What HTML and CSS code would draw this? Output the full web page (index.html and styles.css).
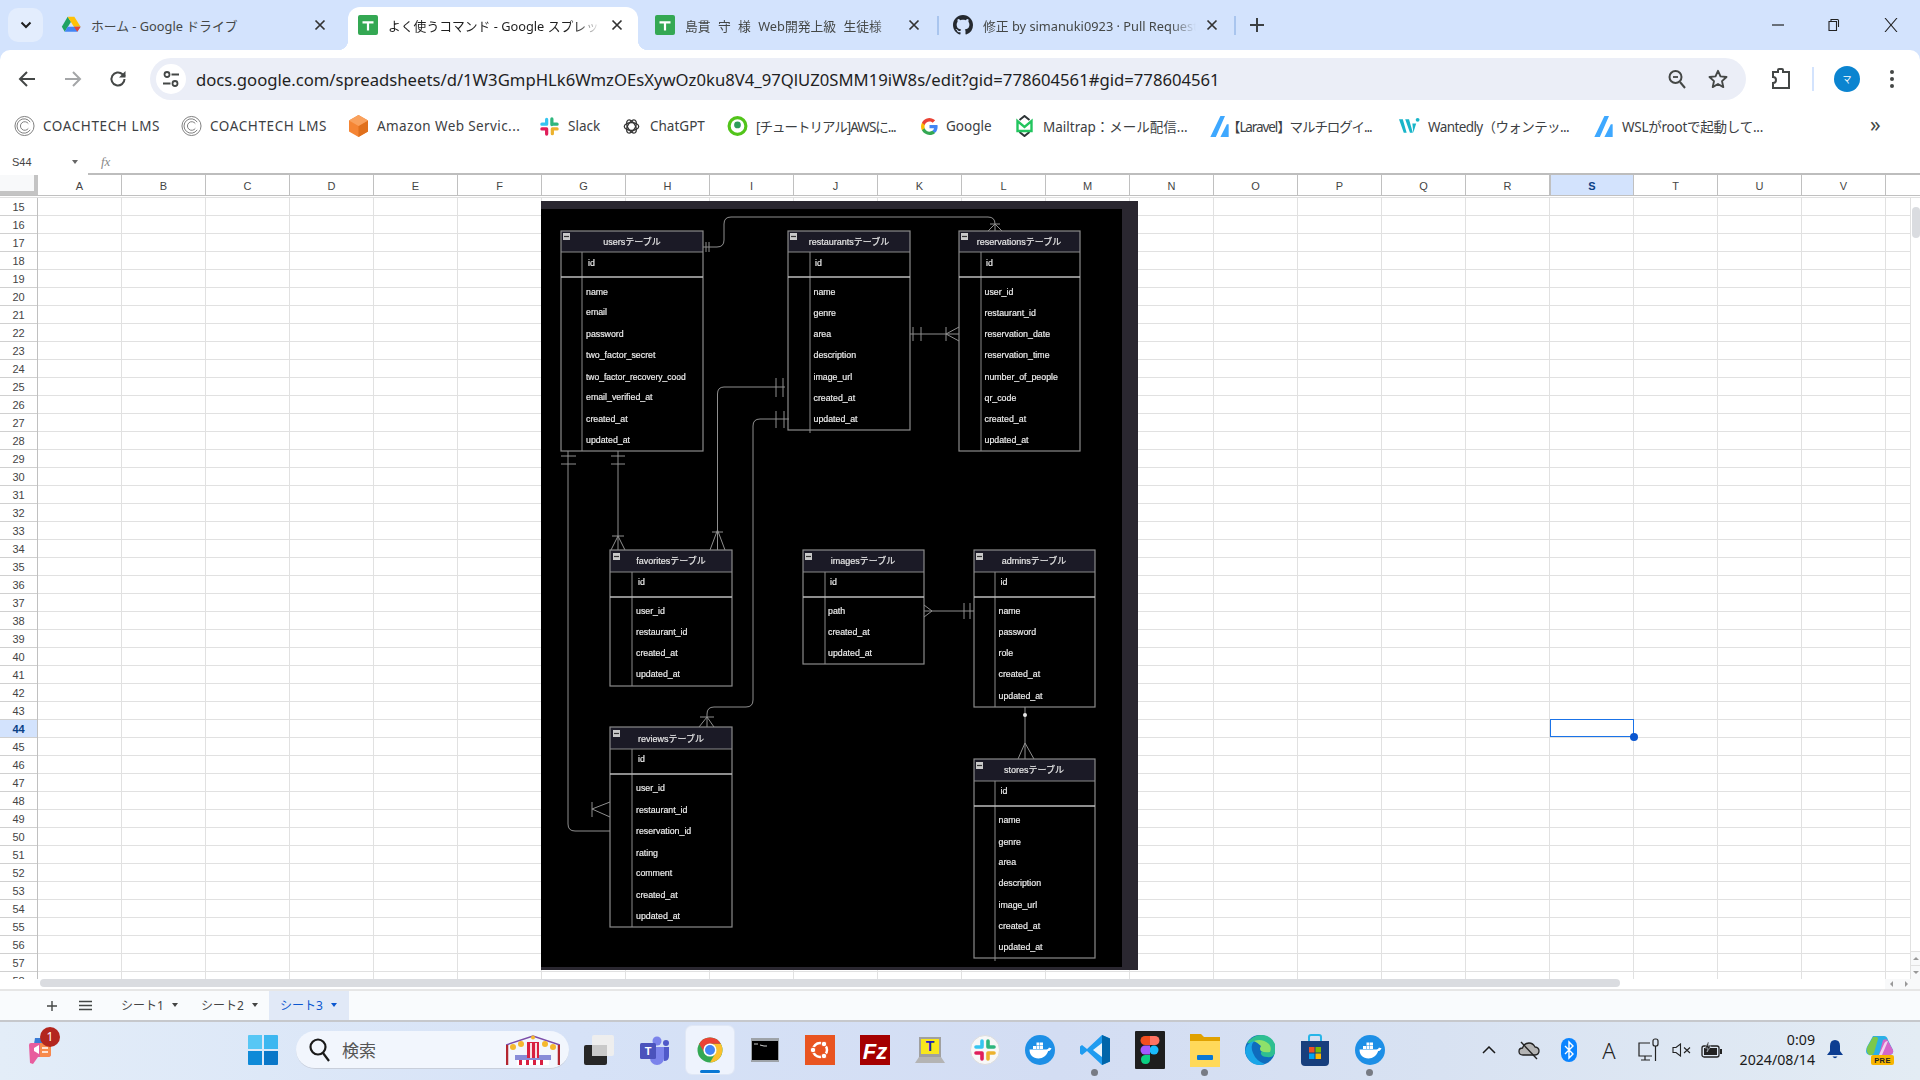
FILE: index.html
```html
<!DOCTYPE html>
<html lang="ja">
<head>
<meta charset="utf-8">
<title>よく使うコマンド - Google スプレッドシート</title>
<link rel="stylesheet" href="styles.css">
</head>
<body>
<svg class="defs" aria-hidden="true">
  <symbol id="sheets" viewBox="0 0 20 20"><rect width="20" height="20" rx="2" fill="#34a853"/><path d="M4.5 6.2h11v2.2h-4.4v7h-2.2v-7H4.500z" fill="#fff"/></symbol>
  <symbol id="x" viewBox="0 0 12 12"><path d="M1.500 1.500l9 9M10.500 1.500l-9 9" fill="none" stroke="currentColor" stroke-width="1.700"/></symbol>
  <symbol id="coach" viewBox="0 0 22 22"><g fill="none" stroke="#7a7a7a" stroke-width="1"><circle cx="11" cy="11" r="10"/><path d="M17 7a7.500 7.500 0 1 0 0 8"/><path d="M15 8.500a4.500 4.500 0 1 0 0 5"/></g></symbol>
  <symbol id="zenn" viewBox="0 0 20 24"><path d="M0 24L11 1h5L6 24zM11 24l7-14h2v14z" fill="#3ea8ff"/></symbol>
  <symbol id="docker" viewBox="0 0 30 30"><circle cx="15" cy="15" r="15" fill="#1d8fe6"/><path d="M4.500 14.500h17c1 0 2-1 2.500-2 1 .5 2 .6 2.500.4-.5 2-2 3-3.300 3.200C21.500 21 18 23.500 13.500 23.500 8 23.500 4.500 20 4.500 14.500z" fill="#fff"/><path d="M8 11h3v3H8zM11.500 11h3v3h-3zM15 11h3v3h-3zM11.500 7.500h3v3h-3zM15 7.500h3v3h-3z" fill="#fff"/></symbol>
</svg>

<header class="tabstrip">
  <button class="tab-search"><svg width="12" height="8" viewBox="0 0 12 8"><path d="M1.500 1.500L6 6l4.500-4.500" fill="none" stroke="#1f1f1f" stroke-width="2"/></svg></button>
  <div class="tab tab-a">
    <svg class="fav" viewBox="0 0 24 22"><path d="M8 1L1 13l3.500 6L12 7z" fill="#1ea362"/><path d="M8 1h8l7.500 12h-8z" fill="#ffc107"/><path d="M4.500 19h15l4-6H8z" fill="#4285f4"/><path d="M19.500 19l4-6h-8z" fill="#ea4335"/></svg>
    <span class="tab-title">ホーム - Google ドライブ</span>
    <svg class="tab-x"><use href="#x"/></svg>
  </div>
  <div class="tab tab-b">
    <svg class="fav"><use href="#sheets"/></svg>
    <span class="tab-title fade">よく使うコマンド - Google スプレッドシート</span>
    <svg class="tab-x"><use href="#x"/></svg>
  </div>
  <div class="tab tab-c">
    <svg class="fav"><use href="#sheets"/></svg>
    <span class="tab-title fade">島貫 守 様 Web開発上級 生徒様</span>
    <svg class="tab-x"><use href="#x"/></svg>
  </div>
  <div class="tab tab-d">
    <svg class="fav" viewBox="0 0 16 16"><path fill="#24292f" d="M8 0C3.580 0 0 3.580 0 8c0 3.540 2.290 6.530 5.470 7.590.4.070.55-.17.55-.38 0-.19-.01-.82-.01-1.490-2.010.37-2.530-.49-2.690-.94-.09-.23-.48-.94-.82-1.130-.28-.15-.68-.52-.01-.53.63-.01 1.080.58 1.230.82.72 1.210 1.870.87 2.330.66.07-.52.28-.87.51-1.070-1.780-.2-3.640-.89-3.640-3.950 0-.87.31-1.590.82-2.150-.08-.2-.36-1.020.08-2.120 0 0 .67-.21 2.200.82.64-.18 1.320-.27 2-.27.68 0 1.360.09 2 .27 1.530-1.040 2.200-.82 2.200-.82.44 1.100.16 1.920.08 2.120.51.56.82 1.270.82 2.150 0 3.070-1.870 3.750-3.650 3.950.29.25.54.73.54 1.480 0 1.070-.01 1.930-.01 2.200 0 .21.15.46.55.38A8.013 8.013 0 0016 8c0-4.420-3.580-8-8-8z"/></svg>
    <span class="tab-title fade">修正 by simanuki0923 · Pull Request</span>
    <svg class="tab-x"><use href="#x"/></svg>
  </div>
  <svg class="newtab" viewBox="0 0 14 14"><path d="M7 0v14M0 7h14" stroke="#3c4043" stroke-width="2"/></svg>
  <div class="winbtns">
    <svg class="winbtn" viewBox="0 0 14 14"><path d="M1 7h12" stroke="#222" stroke-width="1.200"/></svg>
    <svg class="winbtn" viewBox="0 0 14 14"><path d="M3 3.500h7.500v9H3zM5 3.500V1.500h6.500q1 0 1 1V9" fill="none" stroke="#222" stroke-width="1.100"/></svg>
    <svg class="winbtn" viewBox="0 0 14 14"><path d="M1 0l12 14M13 0L1 14" stroke="#222" stroke-width="1.100"/></svg>
  </div>
</header>

<nav class="toolbar">
  <span class="navbtn"><svg width="18" height="18" viewBox="0 0 18 18"><path d="M17 9H2.500M9 2L2 9l7 7" fill="none" stroke="#444746" stroke-width="2"/></svg></span>
  <span class="navbtn"><svg width="18" height="18" viewBox="0 0 18 18"><path d="M1 9h14.500M9 2l7 7-7 7" fill="none" stroke="#a4a6a8" stroke-width="2"/></svg></span>
  <span class="navbtn"><svg width="18" height="18" viewBox="0 0 18 18"><path d="M15.500 9a6.500 6.500 0 1 1-2-4.700L16 6.500" fill="none" stroke="#444746" stroke-width="2"/><path d="M16.500 1v6.500H10z" fill="#444746"/></svg></span>
  <div class="omnibox">
    <span class="site-info"><svg width="16" height="18" viewBox="0 0 16 18"><g fill="none" stroke="#444746" stroke-width="1.800"><circle cx="4" cy="4.500" r="2.500"/><path d="M8.500 4.500H16M0 13.500h7.500"/><circle cx="12" cy="13.500" r="2.500"/></g></svg></span>
    <span class="url">docs.google.com/spreadsheets/d/1W3GmpHLk6WmzOEsXywOz0ku8V4_97QlUZ0SMM19iW8s/edit?gid=778604561#gid=778604561</span>
    <svg class="omni-zoom" width="18" height="20" viewBox="0 0 18 20"><g fill="none" stroke="#444746" stroke-width="2"><circle cx="7.500" cy="8" r="6"/><path d="M12 13l5 6"/></g><path d="M5 8h5" stroke="#444746" stroke-width="1.800"/></svg>
    <svg class="omni-star" width="20" height="20" viewBox="0 0 20 20"><path d="M10 1.800l2.500 5.600 6 .6-4.500 4.100 1.300 6L10 15l-5.300 3.100 1.300-6L1.500 8l6-.6z" fill="none" stroke="#444746" stroke-width="1.900" stroke-linejoin="round"/></svg>
  </div>
  <svg class="ext" width="20" height="22" viewBox="0 0 20 22"><path d="M2 4h5V2q0-1 1-1h3q1 0 1 1v2h6v16H2v-5q3 0 3-3t-3-3z" fill="none" stroke="#444746" stroke-width="2"/></svg>
  <span class="tb-sep"></span>
  <span class="avatar">マ</span>
  <svg class="kebab" width="4" height="18" viewBox="0 0 4 18"><g fill="#444746"><circle cx="2" cy="2" r="2"/><circle cx="2" cy="9" r="2"/><circle cx="2" cy="16" r="2"/></g></svg>
</nav>

<nav class="bookmarks">
  <a class="bm sp-coach"><svg class="bm-ico"><use href="#coach"/></svg>COACHTECH LMS</a>
  <a class="bm sp-coach"><svg class="bm-ico"><use href="#coach"/></svg>COACHTECH LMS</a>
  <a class="bm sp-aws"><svg class="bm-ico" viewBox="0 0 20 22"><path d="M10 0l9.500 5.500v11L10 22 .5 16.500v-11z" fill="#f58534"/><path d="M10 11v11l9.500-5.500v-11z" fill="#e0701c"/><path d="M10 0L.5 5.500 10 11l9.500-5.500z" fill="#f9a15d"/></svg>Amazon Web Servic...</a>
  <a class="bm"><svg class="bm-ico bm-slack" viewBox="0 0 20 20"><g stroke-width="3.400" stroke-linecap="round" fill="none"><path d="M7 2.500v5M2 7.500h5" stroke="#36c5f0"/><path d="M12.500 2v6M12.500 7.500H18" stroke="#2eb67d"/><path d="M13 12.500h5M13 12.500v5" stroke="#ecb22e"/><path d="M7 18v-5M2 12.500h5" stroke="#e01e5a"/></g></svg>Slack</a>
  <a class="bm"><svg class="bm-ico bm-gpt" viewBox="0 0 20 20"><g fill="none" stroke="#333" stroke-width="1.500"><ellipse cx="10" cy="10" rx="8.500" ry="4.500"/><ellipse cx="10" cy="10" rx="8.500" ry="4.500" transform="rotate(60 10 10)"/><ellipse cx="10" cy="10" rx="8.500" ry="4.500" transform="rotate(120 10 10)"/></g></svg>ChatGPT</a>
  <a class="bm sp-chute"><svg class="bm-ico" viewBox="0 0 20 20"><circle cx="10" cy="10" r="8" fill="none" stroke="#52c41a" stroke-width="3"/><circle cx="10" cy="9" r="3.200" fill="#2e9e5b"/></svg>[チュートリアル]AWSに...</a>
  <a class="bm"><svg class="bm-ico bm-g" viewBox="0 0 18 18"><path d="M17.600 9.200c0-.6-.1-1.200-.2-1.800H9v3.400h4.800c-.2 1.100-.8 2-1.800 2.700v2.200h2.900c1.700-1.600 2.700-3.900 2.700-6.500z" fill="#4285f4"/><path d="M9 18c2.400 0 4.500-.8 5.900-2.200L12 13.600c-.8.500-1.800.9-3 .9-2.300 0-4.300-1.600-5-3.700H1v2.300C2.500 16 5.500 18 9 18z" fill="#34a853"/><path d="M4 10.700a5.400 5.400 0 0 1 0-3.400V5H1a9 9 0 0 0 0 8z" fill="#fbbc05"/><path d="M9 3.600c1.300 0 2.500.5 3.400 1.300L15 2.400A9 9 0 0 0 1 5l3 2.300c.7-2.100 2.700-3.700 5-3.700z" fill="#ea4335"/></svg>Google</a>
  <a class="bm"><svg class="bm-ico" viewBox="0 0 20 22"><path d="M5 5l5-4 5 4M5 17l5 4 5-4" fill="none" stroke="#2d3436" stroke-width="2"/><path d="M3 6v10h14V6l-7 6z" fill="none" stroke="#22c55e" stroke-width="2.400"/></svg>Mailtrap：メール配信...</a>
  <a class="bm bm-zenn"><svg class="bm-ico"><use href="#zenn"/></svg>【Laravel】マルチログイ...</a>
  <a class="bm sp-want"><svg class="bm-ico" viewBox="0 0 22 20"><path d="M0 3h4l4 14H5zM6.500 3h4l4 14h-3zM14 7.500h4L15 17z" fill="#19b5c9"/><circle cx="19.500" cy="3.500" r="2" fill="#19b5c9"/></svg>Wantedly（ウォンテッ...</a>
  <a class="bm sp-wsl"><svg class="bm-ico"><use href="#zenn"/></svg>WSLがrootで起動して...</a>
  <span class="bm-more">»</span>
</nav>

<div class="formula">
  <span class="namebox">S44</span>
  <span class="name-arrow"></span>
  <span class="fx">fx</span>
  <span class="formula-input"></span>
</div>

<main class="sheet">
  <div class="colhead">
    <div class="cols">
      <span class="corner"></span>
      <span class="col">A</span><span class="col">B</span><span class="col">C</span><span class="col">D</span><span class="col">E</span><span class="col">F</span><span class="col">G</span><span class="col">H</span><span class="col">I</span><span class="col">J</span><span class="col">K</span><span class="col">L</span><span class="col">M</span><span class="col">N</span><span class="col">O</span><span class="col">P</span><span class="col">Q</span><span class="col">R</span><span class="col col-on">S</span><span class="col">T</span><span class="col">U</span><span class="col">V</span>
    </div>
  </div>
  <div class="grid">
    <div class="rows">
      <span class="row">15</span><span class="row">16</span><span class="row">17</span><span class="row">18</span><span class="row">19</span><span class="row">20</span><span class="row">21</span><span class="row">22</span><span class="row">23</span><span class="row">24</span><span class="row">25</span><span class="row">26</span><span class="row">27</span><span class="row">28</span><span class="row">29</span><span class="row">30</span><span class="row">31</span><span class="row">32</span><span class="row">33</span><span class="row">34</span><span class="row">35</span><span class="row">36</span><span class="row">37</span><span class="row">38</span><span class="row">39</span><span class="row">40</span><span class="row">41</span><span class="row">42</span><span class="row">43</span><span class="row row-on">44</span><span class="row">45</span><span class="row">46</span><span class="row">47</span><span class="row">48</span><span class="row">49</span><span class="row">50</span><span class="row">51</span><span class="row">52</span><span class="row">53</span><span class="row">54</span><span class="row">55</span><span class="row">56</span><span class="row">57</span><span class="row">58</span>
    </div>
    <div class="cells"></div>
  </div>
  <div class="hscroll"><span class="hthumb"></span><span class="harrows"><i class="al"></i><i class="ar"></i></span></div>

  <div class="vscroll"><span class="vthumb"></span><span class="vbtn"><i class="au"></i></span><span class="vbtn"><i class="ad"></i></span></div>
  <div class="selection"><span class="handle"></span></div>

  <svg class="er" viewBox="541 201 597 769">
    <rect x="541" y="201" width="597" height="769" fill="#2a2730"/>
    <rect x="541" y="209" width="581" height="758" fill="#000"/>

    <g class="link">
      <path d="M703 247H717Q724 247 724 240V224Q724 217 731 217H988Q995 217 995 224V231"/>
      <path d="M706 242V252M709 242V252M988 231L995 224L1002 231M990 224H1000"/>
      <path d="M910 334H959M913 327V341M921 327V341M946 327V341M959 327L946 334L959 341"/>
      <path d="M717.500 550V394Q717.500 387 724 387H785M776 378V397M783 378V397"/>
      <path d="M710 550L717.500 530L725 550M712 532H723"/>
      <path d="M707 727V714Q707 707 714 707H746Q753 707 753 700V426Q753 419 760 419H789M776 411V428M784 411V428"/>
      <path d="M699 727L707 717L714 727M700 717H714"/>
      <path d="M568 451V824Q568 831 575 831H610M561 456H576M561 464H576"/>
      <path d="M618 451V550M611 456H625M611 464H625M611 550L618 536L625 550M612 536H624"/>
      <path d="M592 802V817M592 809L610 802M592 809L610 817"/>
      <path d="M924 611H974M924 605L932 611L924 617M964 603V619M970 603V619"/>
      <path d="M1025 707V759M1018 759L1025 743L1034 759"/>
      <circle cx="1025" cy="715" r="2" class="dot"/>
    </g>

    <g class="tbl">
      <rect class="head" x="561" y="231" width="142" height="21"/><rect class="box" x="561" y="231" width="142" height="220"/>
      <path class="ln" d="M561 252H703M582 252V451"/><path class="dbl" d="M561 277H703"/>
      <rect class="mini" x="563" y="233" width="7" height="7"/><path class="dash" d="M564 236.500H569"/>
      <text class="ttl" x="632" y="245">usersテーブル</text>
      <text x="588" y="266">id</text><text x="586" y="295">name</text><text x="586" y="315">email</text><text x="586" y="337">password</text><text x="586" y="358">two_factor_secret</text><text x="586" y="380" class="tight">two_factor_recovery_cood</text><text x="586" y="400">email_verified_at</text><text x="586" y="422">created_at</text><text x="586" y="443">updated_at</text>
    </g>
    <g class="tbl">
      <rect class="head" x="788" y="231" width="122" height="21"/><rect class="box" x="788" y="231" width="122" height="199"/>
      <path class="ln" d="M788 252H910M810 252V433"/><path class="dbl" d="M788 277H910"/>
      <rect class="mini" x="790" y="233" width="7" height="7"/><path class="dash" d="M791 236.500H796"/>
      <text class="ttl" x="849" y="245">restaurantsテーブル</text>
      <text x="815" y="266">id</text><text x="813.500" y="295">name</text><text x="813.500" y="316">genre</text><text x="813.500" y="337">area</text><text x="813.500" y="358">description</text><text x="813.500" y="380">image_url</text><text x="813.500" y="401">created_at</text><text x="813.500" y="422">updated_at</text>
    </g>
    <g class="tbl">
      <rect class="head" x="959" y="231" width="121" height="21"/><rect class="box" x="959" y="231" width="121" height="220"/>
      <path class="ln" d="M959 252H1080M981 252V451"/><path class="dbl" d="M959 277H1080"/>
      <rect class="mini" x="961" y="233" width="7" height="7"/><path class="dash" d="M962 236.500H967"/>
      <text class="ttl" x="1019" y="245">reservationsテーブル</text>
      <text x="986" y="266">id</text><text x="984.500" y="295">user_id</text><text x="984.500" y="316">restaurant_id</text><text x="984.500" y="337">reservation_date</text><text x="984.500" y="358">reservation_time</text><text x="984.500" y="380">number_of_people</text><text x="984.500" y="401">qr_code</text><text x="984.500" y="422">created_at</text><text x="984.500" y="443">updated_at</text>
    </g>
    <g class="tbl">
      <rect class="head" x="610" y="550" width="122" height="22"/><rect class="box" x="610" y="550" width="122" height="136"/>
      <path class="ln" d="M610 572H732M632 572V686"/><path class="dbl" d="M610 597H732"/>
      <rect class="mini" x="613" y="553" width="7" height="7"/><path class="dash" d="M614 556.500H619"/>
      <text class="ttl" x="671" y="564">favoritesテーブル</text>
      <text x="638" y="585">id</text><text x="636" y="614">user_id</text><text x="636" y="635">restaurant_id</text><text x="636" y="656">created_at</text><text x="636" y="677">updated_at</text>
    </g>
    <g class="tbl">
      <rect class="head" x="803" y="550" width="121" height="22"/><rect class="box" x="803" y="550" width="121" height="114"/>
      <path class="ln" d="M803 572H924M825 572V664"/><path class="dbl" d="M803 597H924"/>
      <rect class="mini" x="805" y="553" width="7" height="7"/><path class="dash" d="M806 556.500H811"/>
      <text class="ttl" x="863" y="564">imagesテーブル</text>
      <text x="830" y="585">id</text><text x="828" y="614">path</text><text x="828" y="635">created_at</text><text x="828" y="656">updated_at</text>
    </g>
    <g class="tbl">
      <rect class="head" x="974" y="550" width="121" height="22"/><rect class="box" x="974" y="550" width="121" height="157"/>
      <path class="ln" d="M974 572H1095M995 572V707"/><path class="dbl" d="M974 597H1095"/>
      <rect class="mini" x="976" y="553" width="7" height="7"/><path class="dash" d="M977 556.500H982"/>
      <text class="ttl" x="1034" y="564">adminsテーブル</text>
      <text x="1000.500" y="585">id</text><text x="998.500" y="614">name</text><text x="998.500" y="635">password</text><text x="998.500" y="656">role</text><text x="998.500" y="677">created_at</text><text x="998.500" y="699">updated_at</text>
    </g>
    <g class="tbl">
      <rect class="head" x="610" y="727" width="122" height="22"/><rect class="box" x="610" y="727" width="122" height="200"/>
      <path class="ln" d="M610 749H732M632 749V927"/><path class="dbl" d="M610 774H732"/>
      <rect class="mini" x="613" y="730" width="7" height="7"/><path class="dash" d="M614 733.500H619"/>
      <text class="ttl" x="671" y="742">reviewsテーブル</text>
      <text x="638" y="762">id</text><text x="636" y="791">user_id</text><text x="636" y="813">restaurant_id</text><text x="636" y="834">reservation_id</text><text x="636" y="856">rating</text><text x="636" y="876">comment</text><text x="636" y="898">created_at</text><text x="636" y="919">updated_at</text>
    </g>
    <g class="tbl">
      <rect class="head" x="974" y="759" width="121" height="22"/><rect class="box" x="974" y="759" width="121" height="199"/>
      <path class="ln" d="M974 781H1095M995 781V961"/><path class="dbl" d="M974 806H1095"/>
      <rect class="mini" x="976" y="762" width="7" height="7"/><path class="dash" d="M977 765.500H982"/>
      <text class="ttl" x="1034" y="773">storesテーブル</text>
      <text x="1000.500" y="794">id</text><text x="998.500" y="823">name</text><text x="998.500" y="845">genre</text><text x="998.500" y="865">area</text><text x="998.500" y="886">description</text><text x="998.500" y="908">image_url</text><text x="998.500" y="929">created_at</text><text x="998.500" y="950">updated_at</text>
    </g>
  </svg>
</main>

<div class="sheetbar">
  <svg class="sb-add" width="10" height="10" viewBox="0 0 10 10"><path d="M5 0v10M0 5h10" stroke="#444746" stroke-width="1.400"/></svg>
  <svg class="sb-all" width="13" height="11" viewBox="0 0 13 11"><path d="M0 1.500h13M0 5.500h13M0 9.500h13" stroke="#444746" stroke-width="1.500"/></svg>
  <span class="stab">シート1<i class="caret"></i></span>
  <span class="stab">シート2<i class="caret"></i></span>
  <span class="stab stab-on">シート3<i class="caret"></i></span>
</div>

<footer class="taskbar">
  <span class="tk-notify">
    <svg width="30" height="32" viewBox="0 0 30 32"><path d="M9 4l14 0v18H6z" fill="#3a7bd5"/><path d="M3 11q0-2 2-2h17q3 0 3 3v8q0 3-3 3H12l-5 7-3-1z" fill="#e85d9e"/><path d="M14 9h8q3 0 3 3v8q0 3-3 3h-8z" fill="#f78a4a"/><path d="M8 14l5-3v9l-5-3z" fill="#fff"/><path d="M16 14h6M16 18h6" stroke="#fff" stroke-width="1.500"/></svg>
    <b class="tk-badge">1</b>
  </span>
  <span class="tk-win"><svg width="30" height="30" viewBox="0 0 30 30"><path d="M0 1q0-1 1-1h13v14H0z" fill="#57c7f5"/><path d="M16 0h13q1 0 1 1v13H16z" fill="#3db7f0"/><path d="M0 16h14v14H1q-1 0-1-1z" fill="#0f8ad8"/><path d="M16 16h14v13q0 1-1 1H16z" fill="#0a77c8"/></svg></span>
  <div class="tk-search">
    <svg width="21" height="24" viewBox="0 0 21 24"><g fill="none" stroke="#1a1a1a" stroke-width="2.200"><circle cx="9" cy="9" r="7.500"/><path d="M14 15l6 8"/></g></svg>
    <span class="tk-search-text">検索</span>
    <svg class="tk-fest" width="54" height="30" viewBox="0 0 54 30"><path d="M0 10L27 1l27 9" fill="none" stroke="#7b4ba8" stroke-width="1.500"/><path d="M1 10v20M53 10v20" stroke="#b3262f" stroke-width="2.500"/><path d="M9 20h36v5H9z" fill="#5b5fc7" opacity=".7"/><path d="M11 25h32v5H11z" fill="#fff"/><path d="M13 25h3v5h-3zM20 25h3v5h-3zM27 25h3v5h-3zM34 25h3v5h-3z" fill="#d81f40"/><path d="M21 7h12v16H21z" fill="#d81f40"/><path d="M24 8h2v15h-2zM29 8h2v15h-2z" fill="#f8dde2"/><g fill="#f5b82e"><circle cx="7" cy="12" r="3"/><circle cx="15" cy="9" r="3"/><circle cx="39" cy="9" r="3"/><circle cx="47" cy="12" r="3"/><circle cx="27" cy="2.500" r="2"/></g></svg>
  </div>
  <div class="tiles">
    <span class="tile"><svg width="30" height="30" viewBox="0 0 30 30"><rect x="8" width="22" height="21" rx="2" fill="#eeeeee"/><rect y="10" width="23" height="20" rx="2" fill="#272727"/><rect x="8" y="10" width="15" height="11" fill="#c9c9c9"/></svg></span>
    <span class="tile"><svg width="30" height="30" viewBox="0 0 30 30"><circle cx="17" cy="6" r="4.500" fill="#7b83eb"/><circle cx="26" cy="8" r="3" fill="#5059c9"/><path d="M21 12h8v9q0 5-5 5z" fill="#5059c9"/><path d="M10 12h14v11a7 7 0 0 1-14 0z" fill="#7b83eb"/><rect y="8" width="16" height="16" rx="1.500" fill="#4b53bc"/><text class="tk-t" x="8" y="20">T</text></svg></span>
    <span class="tile tile-on"><svg width="30" height="30" viewBox="0 0 48 48"><circle cx="24" cy="24" r="20" fill="#34a853"/><path d="M24 14H41.300A20 20 0 0 1 24 44L32.700 29A10 10 0 0 0 24 14Z" fill="#fbc02d"/><path d="M24 4A20 20 0 0 1 41.300 14H24A10 10 0 0 0 15.300 29L6.700 14A20 20 0 0 1 24 4Z" fill="#ea4335"/><circle cx="24" cy="24" r="10.500" fill="#fff"/><circle cx="24" cy="24" r="8" fill="#4285f4"/></svg><i class="run-on"></i></span>
    <span class="tile"><svg width="28" height="24" viewBox="0 0 28 24"><rect width="28" height="24" fill="#9ea3a8"/><rect x="1" y="3" width="26" height="19" fill="#000"/><path d="M3 6h4M9 7l4 1h3" stroke="#ccc" stroke-width="1"/></svg></span>
    <span class="tile"><svg width="30" height="30" viewBox="0 0 30 30"><rect width="30" height="30" fill="#e95420"/><circle cx="15" cy="15" r="7" fill="none" stroke="#fff" stroke-width="2.500"/><circle cx="8" cy="15" r="2.800" fill="#fff" stroke="#e95420"/><circle cx="19" cy="9" r="2.800" fill="#fff" stroke="#e95420"/><circle cx="19" cy="21" r="2.800" fill="#fff" stroke="#e95420"/></svg></span>
    <span class="tile"><svg width="30" height="30" viewBox="0 0 30 30"><rect width="30" height="30" fill="#a50000"/><text class="tk-fz" x="15" y="24">Fz</text></svg></span>
    <span class="tile"><svg width="30" height="26" viewBox="0 0 30 26"><path d="M4 0h22v20H4z" fill="#a0a0a0"/><rect x="6" y="2" width="18" height="15" fill="#f8e71c"/><path d="M4 20h22l4 6H0z" fill="#b4b4b4"/><text class="tk-tt" x="15" y="14">T</text></svg></span>
    <span class="tile"><svg width="30" height="30" viewBox="0 0 30 30"><circle cx="15" cy="15" r="14.500" fill="#f8f8f8" stroke="#ddd"/><g stroke-width="3.600" stroke-linecap="round" fill="none"><path d="M12 6v5M6 12h6" stroke="#36c5f0"/><path d="M18 6v6M18 12h6" stroke="#2eb67d"/><path d="M18 18h6M18 18v6" stroke="#ecb22e"/><path d="M12 24v-6M6 18h6" stroke="#e01e5a"/></g></svg></span>
    <span class="tile"><svg width="30" height="30"><use href="#docker"/></svg></span>
    <span class="tile"><svg width="30" height="30" viewBox="0 0 30 30"><path d="M22 0l8 3.500v23L22 30 7 16l-5 4-2-1.500V11.500L2 10l5 4z" fill="#1f9cf0"/><path d="M22 0l8 3.500v23L22 30z" fill="#0065a9"/><path d="M22 8v14l-9-7z" fill="#e8f3fb"/></svg><i class="run"></i></span>
    <span class="tile"><svg width="30" height="38" viewBox="0 0 30 38"><rect width="30" height="38" rx="1" fill="#1e1e1e"/><circle cx="19" cy="19" r="4.500" fill="#1abcfe"/><path d="M10 5h5v9h-5a4.500 4.500 0 0 1 0-9z" fill="#f24e1e"/><path d="M15 5h5a4.500 4.500 0 0 1 0 9h-5z" fill="#ff7262"/><path d="M10 14.500h5v9h-5a4.500 4.500 0 0 1 0-9z" fill="#a259ff"/><path d="M10 24h5v4.500a4.500 4.500 0 1 1-5-4.500z" fill="#0acf83"/></svg></span>
    <span class="tile"><svg width="30" height="33" viewBox="0 0 30 33"><path d="M0 0h11l3 3h16v5H0z" fill="#e0a100"/><path d="M0 7h30v26H0z" fill="#ffd95a"/><rect x="7" y="21" width="16" height="5" rx="1" fill="#0a78d4"/></svg><i class="run"></i></span>
    <span class="tile"><svg width="30" height="30" viewBox="0 0 30 30"><circle cx="15" cy="15" r="15" fill="#0f6cbd"/><path d="M2 8Q8 0 16 0q10 0 14 9 1 4 0 9-2 5-8 4-5 0-6-3-1-3 4-4 4-1 1-6-4-5-10-3Q5 9 2 8z" fill="#2ebf91"/><path d="M0 17Q1 8 9 6q-4 5-1 12 3 8 12 11-2 1-5 1Q4 30 0 17z" fill="#1aa6e8"/><path d="M9 6Q17 3 24 9q3 4 1 8-5 1-9-1-2-2 0-5-3-3-7-5z" fill="#8ee06a"/></svg></span>
    <span class="tile"><svg width="30" height="32" viewBox="0 0 30 32"><path d="M9 8V3q0-2 2-2h8q2 0 2 2v5" fill="none" stroke="#28b5e8" stroke-width="2"/><path d="M1 7h28v21q0 4-4 4H5q-4 0-4-4z" fill="#173f7d"/><rect x="9" y="13" width="5.500" height="5.500" fill="#f25022"/><rect x="15.500" y="13" width="5.500" height="5.500" fill="#7fba00"/><rect x="9" y="19.500" width="5.500" height="5.500" fill="#00a4ef"/><rect x="15.500" y="19.500" width="5.500" height="5.500" fill="#ffb900"/></svg></span>
    <span class="tile"><svg width="30" height="30"><use href="#docker"/></svg><i class="run"></i></span>
  </div>
  <div class="tray">
    <span class="tr tr-w"><svg width="14" height="8" viewBox="0 0 14 8"><path d="M1 7l6-6 6 6" fill="none" stroke="#1a1a1a" stroke-width="1.500"/></svg></span>
    <span class="tr tr-w"><svg width="22" height="22" viewBox="0 0 22 22"><path d="M5 16q-4 0-4-3.500Q1 9 4.500 9 6 4 11 4q4 0 6 4 4 .5 4 4t-4 4z" fill="#b4b4b4" stroke="#222" stroke-width="1.300"/><path d="M3 3l16 17" stroke="#222" stroke-width="1.400"/></svg></span>
    <span class="tr tr-w"><svg width="16" height="24" viewBox="0 0 16 24"><rect width="16" height="24" rx="8" fill="#0a84ff"/><path d="M4 8l8 8-4 4V4l4 4-8 8" fill="none" stroke="#fff" stroke-width="1.400"/></svg></span>
    <span class="tr tr-w"><span class="ime">A</span></span>
    <span class="tr tr-m"><svg width="22" height="24" viewBox="0 0 22 24"><path d="M12 5H1v13h13M7 18v4M3 22h9" fill="none" stroke="#222" stroke-width="1.200"/><rect x="15" y="1" width="5" height="7" rx="2" fill="none" stroke="#222" stroke-width="1.200"/><path d="M17.500 8v15" stroke="#222" stroke-width="1.200"/></svg></span>
    <span class="tr tr-s"><svg width="20" height="14" viewBox="0 0 20 14"><path d="M1 4.500h3L8.500 1v12L4 9.500H1z" fill="none" stroke="#222" stroke-width="1.100"/><path d="M12 4.500l6 5.500M18 4.500L12 10" stroke="#222" stroke-width="1.100"/></svg></span>
    <span class="tr tr-b"><svg width="21" height="16" viewBox="0 0 21 16"><rect x="1" y="4" width="17" height="11" rx="2" fill="none" stroke="#222" stroke-width="1.300"/><rect x="3" y="6" width="13" height="7" fill="#222"/><rect x="19" y="7" width="2" height="5" fill="#222"/><path d="M7 0L4 6h3l-1 4 4-6H7l1-4z" fill="#222" stroke="#e3ebf5" stroke-width=".5"/></svg></span>
    <span class="clock"><span>0:09</span><span>2024/08/14</span></span>
    <span class="tr tr-bell"><svg width="16" height="20" viewBox="0 0 16 20"><path d="M8 0q-5 0-5 6v5l-3 4h16l-3-4V6q0-6-5-6z" fill="#0c3d91"/><path d="M5.500 16.500q2.500 3.500 5 0z" fill="#0c3d91"/></svg></span>
    <span class="tr tr-cp"><svg width="30" height="30" viewBox="0 0 30 30"><path d="M8 1h11q3 0 4 4l5 10q1 4-3 5H6q-5 0-5-4 0-3 2-6z" fill="#2bb0e6"/><path d="M2 17q-1-4 2-8l4-7q5-1 5 2L9 18q-2 3-5 2z" fill="#7cc84b"/><path d="M18 5q4-2 5 1l5 9q1 4-3 5H14z" fill="#d466c9"/><path d="M14 20l5-11q1-3 4-3l-6 14z" fill="#fff" opacity=".7"/><rect x="6" y="20" width="23" height="10" rx="2" fill="#f7b500"/><text class="tk-pre" x="17.500" y="28">PRE</text></svg></span>
  </div>
</footer>
</body>
</html>
```
FILE: styles.css
```css
* { box-sizing: border-box; }
html, body { margin: 0; padding: 0; }
body {
  width: 1920px;
  height: 1080px;
  overflow: hidden;
  position: relative;
  display: flex;
  flex-direction: column;
  background: #fff;
  font-family: "Noto Sans", "Noto Sans CJK JP", sans-serif;
  color: #1f1f1f;
}
.defs { position: absolute; width: 0; height: 0; }

/* tab strip */
.tabstrip {
  height: 50px;
  flex: none;
  display: flex;
  align-items: flex-end;
  background: #d3e3fd;
  position: relative;
}
.tab-search {
  width: 35px;
  height: 34px;
  margin: 0 5px 8px 8px;
  border: 0;
  border-radius: 10px;
  background: #e3edfd;
  display: flex;
  align-items: center;
  justify-content: center;
  padding: 0;
}
.tab {
  height: 43px;
  display: flex;
  align-items: center;
  font-size: 12.800px;
  color: #444746;
  position: relative;
}
.tab-a { width: 300px; padding-left: 13px; padding-right: 22px; }
.tab-b {
  width: 290px;
  padding-left: 10px;
  padding-right: 15px;
  background: #fff;
  border-radius: 12px 12px 0 0;
  color: #1f1f1f;
}
.tab-b::before, .tab-b::after {
  content: "";
  position: absolute;
  bottom: 0;
  width: 10px;
  height: 10px;
}
.tab-b::before { left: -10px; background: radial-gradient(circle at 0 0, #d3e3fd 10px, #fff 10.500px); }
.tab-b::after { right: -10px; background: radial-gradient(circle at 100% 0, #d3e3fd 10px, #fff 10.500px); }
.tab-c { width: 301px; padding-left: 17px; padding-right: 19px; word-spacing: 4px; }
.tab-d { width: 297px; padding-left: 14px; padding-right: 18px; }
.tab-c::after, .tab-d::after {
  content: "";
  position: absolute;
  right: 0;
  top: 9px;
  height: 19px;
  width: 2px;
  background: #a9c5ee;
}
.fav { width: 20px; height: 20px; flex: none; margin-bottom: 7px; }
.tab-title {
  flex: 1;
  min-width: 0;
  margin: 0 10px 7px;
  white-space: nowrap;
  overflow: hidden;
}
.fade { -webkit-mask-image: linear-gradient(90deg, #000 88%, transparent); mask-image: linear-gradient(90deg, #000 88%, transparent); }
.tab-x { width: 12px; height: 12px; flex: none; margin-bottom: 7px; color: #333; }
.newtab { width: 14px; height: 14px; margin: 0 0 18px 14px; flex: none; }
.winbtns { margin-left: auto; display: flex; align-self: flex-start; padding: 18px 22px 0 0; gap: 41px; }
.winbtn { width: 14px; height: 14px; display: block; }
.winbtn:nth-child(2) { margin-right: 3px; }

/* toolbar */
.toolbar {
  height: 55px;
  flex: none;
  display: flex;
  align-items: center;
  background: #fff;
  padding: 3px 0 0 4px;
  box-shadow: 0 -10px 0 #d3e3fd;
  border-radius: 10px 10px 0 0;
}
.navbtn { width: 46px; display: flex; justify-content: center; flex: none; }
.navbtn:nth-child(3) { margin-left: -1px; margin-right: 1px; }
.omnibox {
  width: 1596px;
  height: 42px;
  margin-left: 8px;
  border-radius: 21px;
  background: #ebeef7;
  display: flex;
  align-items: center;
  padding-left: 6px;
  flex: none;
}
.site-info {
  width: 30px;
  height: 30px;
  border-radius: 50%;
  background: #fff;
  display: flex;
  align-items: center;
  justify-content: center;
  flex: none;
}
.url { margin-left: 10px; font-size: 16.680px; color: #1f1f1f; white-space: nowrap; }
.omni-zoom { margin-left: auto; }
.omni-star { margin-left: 22px; margin-right: 18px; }
.ext { margin-left: 25px; flex: none; }
.tb-sep { width: 2px; height: 24px; background: #d3e3fd; margin-left: 21px; flex: none; }
.avatar {
  width: 26px;
  height: 26px;
  margin-left: 20px;
  border-radius: 50%;
  background: #0b84d0;
  color: #fff;
  font-size: 9px;
  display: flex;
  align-items: center;
  justify-content: center;
  flex: none;
}
.kebab { margin-left: 30px; flex: none; }

/* bookmarks */
.bookmarks {
  height: 40px;
  flex: none;
  display: grid;
  grid-template-columns: 167px 167px 192px 83px 104px 194px 93px 195px 190px 194px 277px 20px;
  align-items: center;
  padding-left: 14px;
  padding-top: 2px;
  background: #fff;
  font-size: 13.500px;
  color: #3c4043;
}
.bm { display: flex; align-items: center; white-space: nowrap; }
.bm-ico { width: 21px; height: 22px; margin-right: 8px; flex: none; }
.bm-zenn .bm-ico { margin-right: -3px; }
.bm-zenn { letter-spacing: -1.100px; }
.sp-coach { letter-spacing: .6px; }
.sp-aws { letter-spacing: .4px; }
.sp-chute { letter-spacing: -1px; }
.sp-want { letter-spacing: -.6px; }
.sp-wsl { letter-spacing: -.25px; }
.bm-slack, .bm-gpt { width: 19px; height: 19px; margin-right: 9px; }
.bm-gpt { width: 17px; height: 17px; margin-right: 10px; }
.bm-g { width: 17px; height: 17px; margin-right: 8px; }
.bm-more { font-size: 21px; line-height: 1; color: #444746; margin-top: -4px; }

/* formula bar */
.formula {
  height: 30px;
  flex: none;
  display: flex;
  align-items: center;
  padding-top: 4px;
  font-family: "Liberation Sans", Arial, sans-serif;
  background: #fff;
  position: relative;
}
.namebox { margin-left: 12px; width: 60px; font-size: 11px; color: #444; }
.name-arrow { width: 0; height: 0; border: 3.500px solid transparent; border-top: 4px solid #666; border-bottom: 0; }
.fx { margin-left: 23px; font: italic 13px "Liberation Serif", serif; color: #888; }
.formula-input { position: absolute; left: 88px; right: 0; bottom: 0; height: 2px; background: #bdbdbd; }

/* sheet */
.sheet {
  height: 814px;
  flex: none;
  position: relative;
  font-family: "Liberation Sans", Arial, sans-serif;
  font-size: 11px;
  color: #444;
}
.colhead { height: 23px; border-bottom: 1px solid #e1e1e1; }
.cols { height: 21px; display: flex; border-bottom: 1px solid #c0c0c0; }
.corner {
  width: 38px;
  height: 20px;
  flex: none;
  background: #f8f9fa;
  border-right: 4px solid #c4c4c4;
  border-bottom: 4px solid #c4c4c4;
}
.col {
  width: 84px;
  flex: none;
  display: flex;
  align-items: center;
  justify-content: center;
  padding-top: 1px;
  border-right: 1px solid #c0c0c0;
}
.col-on { background: #d3e3fd; font-weight: 700; color: #0b3f86; border-left: 1px solid #c0c0c0; }
.grid { height: 781px; display: flex; overflow: hidden; }
.rows { width: 38px; flex: none; border-right: 1px solid #c0c0c0; }
.row {
  display: flex;
  align-items: center;
  justify-content: center;
  height: 18px;
  border-bottom: 1px solid #d0d0d0;
}
.row-on { background: #d3e3fd; font-weight: 700; color: #0b3f86; }
.cells {
  width: 1872px;
  flex: none;
  background-color: #fff;
  background-image:
    repeating-linear-gradient(90deg, transparent 0 83px, #e1e1e1 83px 84px),
    repeating-linear-gradient(180deg, transparent 0 17px, #e1e1e1 17px 18px);
}
.hscroll { height: 10px; background: #fff; position: relative; display: flex; align-items: flex-start; padding-left: 40px; }
.hthumb { width: 1580px; height: 8px; border-radius: 4px; background: #dadce0; }
.harrows { position: absolute; left: 1885px; right: 0; top: 0; height: 10px; display: flex; background: #f8f9fa; }
.harrows i, .vbtn i { display: block; width: 0; height: 0; border: 3px solid transparent; }
.harrows .al { border-right-color: #999; margin: 2px 6px 0 2px; }
.harrows .ar { border-left-color: #999; margin: 2px 0 0 6px; }
.vscroll {
  position: absolute;
  left: 1910px;
  top: 23px;
  width: 10px;
  height: 781px;
  background: #fff;
  border-left: 1px solid #e1e1e1;
  display: flex;
  flex-direction: column;
  align-items: center;
}
.vthumb { width: 8px; height: 31px; margin-top: 9px; margin-bottom: auto; border-radius: 4px; background: #dadce0; }
.vbtn { width: 100%; height: 14px; background: #f8f9fa; border-top: 1px solid #e1e1e1; display: flex; justify-content: center; align-items: center; }
.vbtn .au { border-bottom-color: #999; margin-top: -3px; }
.vbtn .ad { border-top-color: #999; margin-top: 3px; }
.selection {
  position: absolute;
  left: 1550px;
  top: 544px;
  width: 84px;
  height: 18px;
  border: 1px solid #1a73e8;
}
.handle { position: absolute; right: -5px; bottom: -5px; width: 8px; height: 8px; border-radius: 50%; background: #0b57d0; }

/* ER diagram image laid over the grid */
.er {
  position: absolute;
  left: 541px;
  top: 26px;
  width: 597px;
  height: 769px;
  filter: blur(.35px);
}
.er text { font: 8.800px "Liberation Sans", "Noto Sans CJK JP", sans-serif; fill: #f2f2f2; stroke: #e8e8e8; stroke-width: .18px; }
.er text.tight { font-size: 8.500px; }
.er text.ttl { font-size: 9px; text-anchor: middle; fill: #e8e8e8; }
.head { fill: #1b1a26; stroke: none; }
.box { fill: none; stroke: #8a8a8a; stroke-width: 1.200; }
.ln { fill: none; stroke: #8a8a8a; stroke-width: 1; }
.dbl { fill: none; stroke: #bdbdbd; stroke-width: 1.600; }
.mini { fill: #c9c9c9; }
.dash { stroke: #333; stroke-width: 1.200; }
.link path { fill: none; stroke: #8f8f8f; stroke-width: 1; }
.dot { fill: #e6e6e6; }

/* sheet tab bar */
.sheetbar {
  height: 31px;
  flex: none;
  display: flex;
  align-items: stretch;
  background: #f9fbfd;
  border-top: 2px solid #e6e6e6;
  font-size: 12px;
  color: #444;
  padding-left: 47px;
}
.sb-add { align-self: center; flex: none; }
.sb-all { align-self: center; flex: none; margin: 0 25px 0 22px; }
.stab { display: flex; align-items: center; padding: 0 0 2px 4px; width: 84px; }
.stab + .stab { width: 68px; padding-left: 0; }
.stab-on { width: 80px !important; padding-left: 11px !important; background: #e1e9f7; color: #0b57d0; }
.caret { width: 0; height: 0; margin-left: 8px; border: 3.500px solid transparent; border-top: 4px solid #444; border-bottom: 0; }
.stab-on .caret { border-top-color: #0b57d0; }

/* windows taskbar */
.taskbar {
  height: 60px;
  flex: none;
  display: flex;
  align-items: center;
  padding-bottom: 2px;
  border-top: 2px solid #c6c8cc;
  background: linear-gradient(90deg, #e3edf8 0%, #d6e2f7 30%, #d3ddf3 55%, #d8e2f2 75%, #e3ecf4 100%);
  position: relative;
}
.tk-notify { width: 30px; margin-left: 26px; position: relative; display: flex; }
.tk-badge {
  position: absolute;
  left: 14px;
  top: -7px;
  width: 20px;
  height: 20px;
  border-radius: 50%;
  background: #b3261e;
  color: #fff;
  font: 12px/20px "Noto Sans", sans-serif;
  text-align: center;
}
.tk-win { margin-left: 192px; display: flex; flex: none; }
.tk-search {
  width: 273px;
  height: 38px;
  margin-left: 18px;
  flex: none;
  display: flex;
  align-items: center;
  padding-left: 13px;
  border-radius: 19px;
  background: #f2f6fd;
  border-bottom: 1px solid #c9cfdb;
}
.tk-search-text { margin-left: 12px; font-size: 17px; color: #555; }
.tk-fest { margin-left: auto; margin-right: 9px; }
.tiles { display: flex; margin-left: 3px; flex: none; }
.tile {
  width: 55px;
  height: 48px;
  display: flex;
  align-items: center;
  justify-content: center;
  position: relative;
  flex: none;
}
.tile:first-child svg { margin-left: -2px; }
.tile-on { background: #eef3fd; border-radius: 6px; width: 48px; margin: 0 3.500px; box-shadow: 0 0 0 1px #e0e7f5; }
.run-on { position: absolute; bottom: 1px; left: 14px; width: 20px; height: 3px; border-radius: 2px; background: #0a78d4; }
.run { position: absolute; bottom: -2px; left: 24px; width: 7px; height: 7px; border-radius: 50%; background: #777b84; }
.tk-t { font: 700 11px "Liberation Sans", sans-serif; fill: #fff; text-anchor: middle; }
.tk-fz { font: italic 700 22px "Liberation Sans", sans-serif; fill: #fff; text-anchor: middle; }
.tk-tt { font: 700 14px "Liberation Sans", sans-serif; fill: #2020c0; text-anchor: middle; }
.tk-pre { font: 700 7.500px "Liberation Sans", sans-serif; fill: #222; text-anchor: middle; letter-spacing: .4px; }
.tray { display: flex; align-items: center; margin-left: 72px; flex: none; }
.tr { display: flex; align-items: center; justify-content: center; flex: none; }
.tr-w { width: 40px; }
.tr-m { width: 39px; }
.tr-s { width: 28px; }
.tr-b { width: 31px; }
.ime { font: 300 22px "Noto Sans", sans-serif; color: #222; }
.clock {
  width: 88px;
  display: flex;
  flex-direction: column;
  align-items: flex-end;
  font-size: 14.200px;
  line-height: 20px;
  color: #1a1a1a;
  flex: none;
}
.tr-bell { width: 40px; }
.tr-cp { width: 50px; }
```
